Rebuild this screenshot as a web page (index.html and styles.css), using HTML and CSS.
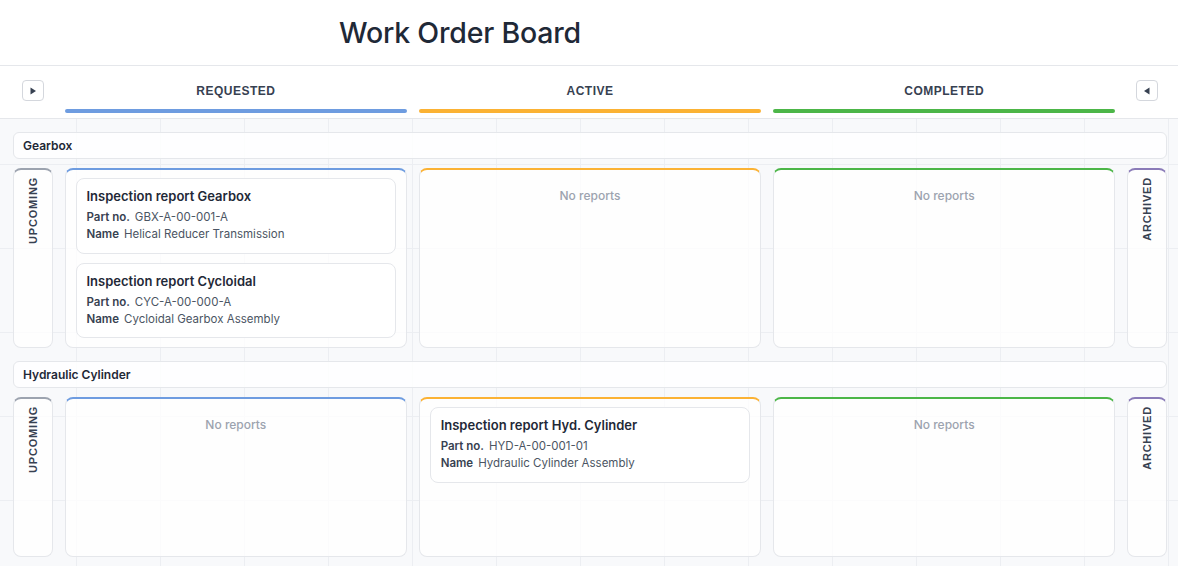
FILE: index.html
```html
<!DOCTYPE html>
<html lang="en">
<head>
<meta charset="utf-8">
<title>Work Order Board</title>
<link rel="stylesheet" href="styles.css">
</head>
<body>
<header class="topbar">
  <h1>Work Order Board</h1>
</header>

<div class="colheads">
  <button class="toggle" aria-label="Show upcoming">
    <svg width="8" height="8" viewBox="0 0 8 8"><path d="M1.5 0.5 L7 4 L1.5 7.5 Z" fill="#374151"/></svg>
  </button>
  <div class="colhead"><span>REQUESTED</span><i class="bar blue"></i></div>
  <div class="colhead"><span>ACTIVE</span><i class="bar orange"></i></div>
  <div class="colhead"><span>COMPLETED</span><i class="bar green"></i></div>
  <button class="toggle" aria-label="Show archived">
    <svg width="8" height="8" viewBox="0 0 8 8"><path d="M6.5 0.5 L1 4 L6.5 7.5 Z" fill="#374151"/></svg>
  </button>
</div>

<main class="board">
  <section class="group">
    <div class="group-title">Gearbox</div>
    <div class="lanes">
      <div class="side upcoming"><span>UPCOMING</span></div>
      <div class="lane blue">
        <article class="card">
          <h3>Inspection report Gearbox</h3>
          <p><b>Part no.</b>GBX-A-00-001-A</p>
          <p><b>Name</b>Helical Reducer Transmission</p>
        </article>
        <article class="card">
          <h3>Inspection report Cycloidal</h3>
          <p><b>Part no.</b>CYC-A-00-000-A</p>
          <p><b>Name</b>Cycloidal Gearbox Assembly</p>
        </article>
      </div>
      <div class="lane orange"><div class="empty">No reports</div></div>
      <div class="lane green"><div class="empty">No reports</div></div>
      <div class="side archived"><span>ARCHIVED</span></div>
    </div>
  </section>

  <section class="group">
    <div class="group-title">Hydraulic Cylinder</div>
    <div class="lanes">
      <div class="side upcoming"><span>UPCOMING</span></div>
      <div class="lane blue"><div class="empty">No reports</div></div>
      <div class="lane orange">
        <article class="card">
          <h3>Inspection report Hyd. Cylinder</h3>
          <p><b>Part no.</b>HYD-A-00-001-01</p>
          <p><b>Name</b>Hydraulic Cylinder Assembly</p>
        </article>
      </div>
      <div class="lane green"><div class="empty">No reports</div></div>
      <div class="side archived"><span>ARCHIVED</span></div>
    </div>
  </section>
</main>
</body>
</html>
```

FILE: styles.css
```css
* { box-sizing: border-box; }

html, body { height: 100%; }

body {
  margin: 0;
  font-family: Inter, "Liberation Sans", sans-serif;
  color: #1f2937;
  background-color: #f8f9fb;
  background-image:
    linear-gradient(to right, #eceef2 1px, transparent 1px),
    linear-gradient(to bottom, #eceef2 1px, transparent 1px);
  background-size: 84px 84px;
  background-position: -8px -4px;
  overflow: hidden;
}

.topbar {
  height: 66px;
  background: #fff;
  border-bottom: 1px solid #e5e7eb;
  display: flex;
  align-items: center;
}

.topbar h1 {
  margin: 0 0 0 339px;
  font-family: Inter, "Liberation Sans", sans-serif;
  font-weight: 500;
  font-size: 28.5px;
  color: #1f2937;
  letter-spacing: -0.2px;
}

.colheads {
  background: #fff;
  border-bottom: 1px solid #e5e7eb;
  display: grid;
  grid-template-columns: 40px repeat(3, 1fr) 40px;
  column-gap: 11.5px;
  padding: 14px 11px 5px 13px;
  align-items: start;
}

.toggle {
  justify-self: center;
  width: 22px;
  height: 21px;
  padding: 0;
  border: 1px solid #d4d7dd;
  border-radius: 4px;
  background: #fff;
  display: flex;
  align-items: center;
  justify-content: center;
}

.colhead {
  display: flex;
  flex-direction: column;
  align-items: center;
}

.colhead span {
  margin-top: 3px;
  line-height: 16px;
  font-family: "Liberation Sans", Arial, sans-serif;
  font-weight: 700;
  font-size: 12px;
  letter-spacing: 0.5px;
  color: #374151;
}

.bar {
  align-self: stretch;
  height: 4px;
  margin-top: 10px;
  border-radius: 2px;
}
.bar.blue { background: #6e9ce0; }
.bar.orange { background: #fbb234; }
.bar.green { background: #4cb648; }

.board {
  padding: 13px 11px 0 13px;
}

.group + .group { margin-top: 13px; }

.group-title {
  height: 27px;
  line-height: 25px;
  padding: 0 9px;
  border: 1px solid #e5e7eb;
  border-radius: 6px;
  background: rgba(255, 255, 255, 0.85);
  font-weight: 600;
  font-size: 12px;
  color: #1f2937;
  margin-bottom: 9px;
}

.lanes {
  display: grid;
  grid-template-columns: 40px repeat(3, 1fr) 40px;
  column-gap: 11.5px;
  min-height: 160px;
}

.lane, .side {
  border: 1px solid #e5e7eb;
  border-top-width: 2px;
  border-radius: 8px;
  background: rgba(255, 255, 255, 0.78);
}

.lane {
  padding: 8px 10px 9px;
  display: flex;
  flex-direction: column;
  gap: 9px;
}

.lane.blue { border-top-color: #6e9ce0; }
.lane.orange { border-top-color: #fbb234; }
.lane.green { border-top-color: #4cb648; }
.side.upcoming { border-top-color: #9ca3af; }
.side.archived { border-top-color: #8a7bb8; }

.side {
  display: flex;
  justify-content: center;
  align-items: flex-start;
  padding-top: 7px;
}

.side span {
  writing-mode: vertical-rl;
  transform: rotate(180deg);
  font-family: "Liberation Sans", Arial, sans-serif;
  font-weight: 700;
  font-size: 11px;
  letter-spacing: 0.8px;
  line-height: 14px;
  color: #374151;
}

.empty {
  margin-top: 10px;
  text-align: center;
  line-height: 16px;
  font-size: 12px;
  font-weight: 500;
  color: #9ca3af;
}

.card {
  background: #fff;
  border: 1px solid #e5e7eb;
  border-radius: 8px;
  padding: 9px 10px 9.5px;
}

.card h3 {
  margin: 0 0 5px;
  font-size: 13px;
  line-height: 16px;
  font-weight: 600;
  color: #1f2937;
}

.card p {
  margin: 0;
  font-size: 11.5px;
  line-height: 17px;
  color: #4b5563;
}

.card p b {
  font-weight: 600;
  color: #374151;
  margin-right: 5px;
}
```
